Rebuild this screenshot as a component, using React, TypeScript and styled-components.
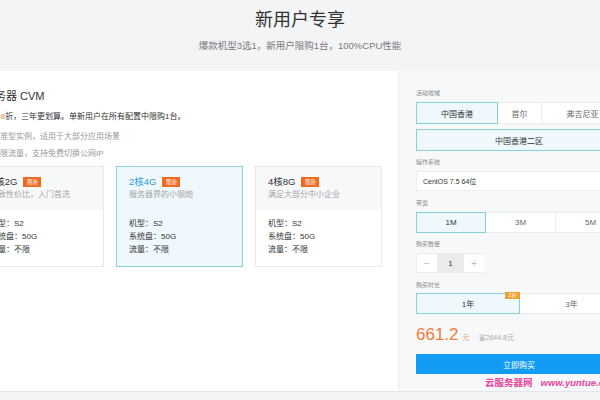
import React from 'react'
import styled, { createGlobalStyle } from 'styled-components'

const GlobalStyle = createGlobalStyle`
  html, body {
    margin: 0;
    padding: 0;
    background: #f3f4f6;
    overflow: hidden;
  }
  body {
    font-family: "Liberation Sans", "Noto Sans CJK SC", sans-serif;
    color: #333;
  }
`

const Page = styled.div`
  width: 600px;
  height: 400px;
  overflow: hidden;
  background: #f3f4f6;
`

const Header = styled.header`
  height: 71px;
  display: flex;
  flex-direction: column;
  align-items: center;
  padding-top: 9px;
  box-sizing: border-box;
`

const Title = styled.h1`
  margin: 0;
  font-size: 18px;
  line-height: 22px;
  font-weight: 400;
  color: #333;
`

const Subtitle = styled.p`
  margin: 9px 0 0;
  font-size: 9.5px;
  line-height: 12px;
  color: #7a7a7a;
`

const Main = styled.main`
  display: flex;
  gap: 2px;
  height: 320px;
  border-bottom: 1px solid #e3e5e9;
`

const LeftPanel = styled.section`
  flex: 0 0 398px;
  background: #fff;
  padding-top: 18px;
  box-sizing: border-box;
  overflow: hidden;
`

const LeftInner = styled.div`
  margin-left: -24px;
`

const ProductTitle = styled.h2`
  margin: 0 0 0 -3px;
  font-size: 11px;
  line-height: 14px;
  font-weight: 400;
  color: #333;
`

const Lead = styled.p`
  margin: 8px 0 0 2px;
  font-size: 8px;
  line-height: 12px;
  color: #333;
`

const Hl = styled.span`
  color: #f07c3a;
`

const Note = styled.p<{ $gap: number }>`
  margin: ${({ $gap }) => $gap}px 0 0;
  padding-left: 16px;
  font-size: 8px;
  line-height: 12px;
  color: #9a9a9a;
`

const Cards = styled.div`
  display: grid;
  grid-template-columns: repeat(3, 127px);
  gap: 12px;
  margin-top: 6px;
  margin-left: 1px;
`

const Card = styled.div<{ $active?: boolean }>`
  border: 1px solid ${({ $active }) => ($active ? '#8ad3dc' : '#e7e9ec')};
  background: ${({ $active }) => ($active ? '#eef8fd' : '#fff')};
  height: 101px;
  box-sizing: border-box;
`

const CardHead = styled.div<{ $active?: boolean }>`
  height: 43px;
  box-sizing: border-box;
  padding: 8px 12px 0;
  background: ${({ $active }) => ($active ? 'transparent' : '#f7f8fa')};
`

const CardTitle = styled.div<{ $active?: boolean }>`
  display: flex;
  align-items: center;
  gap: 6px;
  font-size: 9.5px;
  line-height: 14px;
  color: ${({ $active }) => ($active ? '#2a9ed8' : '#333')};
`

const NewTag = styled.span`
  display: inline-block;
  width: 18px;
  height: 10px;
  line-height: 10px;
  text-align: center;
  font-size: 5.5px;
  color: #fff;
  background: #f06a1d;
`

const CardDesc = styled.div`
  font-size: 8px;
  line-height: 12px;
  color: #a5a5a5;
`

const CardBody = styled.div`
  padding: 7px 12px 0;
`

const Spec = styled.div`
  font-size: 8px;
  line-height: 13px;
  color: #333;
`

const RightPanel = styled.aside`
  flex: 0 0 238px;
  background: #f7f8fa;
  padding: 17px 16px 0;
  box-sizing: border-box;
`

const Label = styled.div<{ $top: number; $bottom: number }>`
  font-size: 6px;
  line-height: 10px;
  color: #888;
  margin: ${({ $top, $bottom }) => `${$top}px 0 ${$bottom}px`};
`

const OptionRow = styled.div<{ $cols: string; $h: number; $top?: number }>`
  display: grid;
  grid-template-columns: ${({ $cols }) => $cols};
  height: ${({ $h }) => $h}px;
  margin-top: ${({ $top }) => $top || 0}px;
`

const Option = styled.div<{ $active?: boolean }>`
  position: relative;
  display: flex;
  align-items: center;
  justify-content: center;
  font-size: 8px;
  color: ${({ $active }) => ($active ? '#333' : '#666')};
  background: ${({ $active }) => ($active ? '#eef8fd' : '#fff')};
  border: 1px solid ${({ $active }) => ($active ? '#86d1d9' : '#ececec')};
  box-sizing: border-box;
  z-index: ${({ $active }) => ($active ? 1 : 0)};
  & + & {
    margin-left: -1px;
  }
`

const Discount = styled.span`
  position: absolute;
  top: -2px;
  right: -1px;
  width: 15px;
  height: 7px;
  line-height: 7px;
  text-align: center;
  font-size: 5px;
  color: #fff;
  background: #f0a030;
`

const Select = styled.div`
  height: 20px;
  display: flex;
  align-items: center;
  padding-left: 6px;
  font-size: 7px;
  color: #333;
  background: #fff;
  border: 1px solid #eceef1;
  box-sizing: border-box;
`

const Stepper = styled.div`
  display: grid;
  grid-template-columns: 20px 27px 20px;
  width: 67px;
  height: 20px;
  border: 1px solid #ececec;
  box-sizing: border-box;
  background: #fff;
`

const StepBtn = styled.div<{ $mid?: boolean }>`
  display: flex;
  align-items: center;
  justify-content: center;
  font-size: ${({ $mid }) => ($mid ? '8px' : '10px')};
  color: ${({ $mid }) => ($mid ? '#333' : '#bbb')};
  background: ${({ $mid }) => ($mid ? '#ebebeb' : '#fff')};
`

const PriceRow = styled.div`
  display: flex;
  align-items: baseline;
  margin-top: 10px;
  height: 22px;
`

const Price = styled.span`
  font-size: 17px;
  line-height: 22px;
  color: #f07c3a;
`

const Unit = styled.span`
  margin-left: 4px;
  font-size: 7px;
  color: #e9a073;
`

const Save = styled.span`
  margin-left: 9px;
  font-size: 7px;
  color: #aaa;
`

const BuyButton = styled.button`
  display: block;
  width: 206px;
  height: 20px;
  margin-top: 8px;
  border: 0;
  padding: 0;
  background: #129bf2;
  color: #fff;
  font-family: inherit;
  font-size: 8px;
`

const Watermark = styled.div`
  margin: 2px 0 0 69px;
  white-space: nowrap;
  font-size: 9.5px;
  line-height: 13px;
  font-weight: 700;
  color: #e8459b;
  em {
    margin-left: 8px;
    font-style: italic;
  }
`

const cards = [
  { title: '1核2G', desc: '极致性价比，入门首选' },
  { title: '2核4G', desc: '服务器界的小钢炮', active: true },
  { title: '4核8G', desc: '满足大部分中小企业' }
]

const App: React.FC = () => {
  return (
    <Page>
      <GlobalStyle />
      <Header>
        <Title>新用户专享</Title>
        <Subtitle>爆款机型3选1，新用户限购1台，100%CPU性能</Subtitle>
      </Header>
      <Main>
        <LeftPanel>
          <LeftInner>
            <ProductTitle>云服务器 CVM</ProductTitle>
            <Lead>
              低至<Hl>1.8</Hl>折，三年更划算。单新用户在所有配置中限购1台。
            </Lead>
            <Note $gap={8}>标准型实例，适用于大部分应用场景</Note>
            <Note $gap={5}>不限流量，支持免费切换公网IP</Note>
            <Cards>
              {cards.map((c) => (
                <Card key={c.title} $active={c.active}>
                  <CardHead $active={c.active}>
                    <CardTitle $active={c.active}>
                      {c.title}
                      <NewTag>限新</NewTag>
                    </CardTitle>
                    <CardDesc>{c.desc}</CardDesc>
                  </CardHead>
                  <CardBody>
                    <Spec>机型：S2</Spec>
                    <Spec>系统盘：50G</Spec>
                    <Spec>流量：不限</Spec>
                  </CardBody>
                </Card>
              ))}
            </Cards>
          </LeftInner>
        </LeftPanel>
        <RightPanel>
          <Label $top={0} $bottom={4}>活动地域</Label>
          <OptionRow $cols="82px 44px 82px" $h={22}>
            <Option $active>中国香港</Option>
            <Option>首尔</Option>
            <Option>弗吉尼亚</Option>
          </OptionRow>
          <OptionRow $cols="206px" $h={22} $top={5}>
            <Option $active>中国香港二区</Option>
          </OptionRow>
          <Label $top={6} $bottom={4}>操作系统</Label>
          <Select>CentOS 7.5 64位</Select>
          <Label $top={7} $bottom={4}>带宽</Label>
          <OptionRow $cols="70px 70px 70px" $h={21}>
            <Option $active>1M</Option>
            <Option>3M</Option>
            <Option>5M</Option>
          </OptionRow>
          <Label $top={6} $bottom={4}>购买数量</Label>
          <Stepper>
            <StepBtn>−</StepBtn>
            <StepBtn $mid>1</StepBtn>
            <StepBtn>+</StepBtn>
          </Stepper>
          <Label $top={7} $bottom={3}>购买时长</Label>
          <OptionRow $cols="104px 104px" $h={21}>
            <Option $active>
              1年
              <Discount>2折</Discount>
            </Option>
            <Option>3年</Option>
          </OptionRow>
          <PriceRow>
            <Price>661.2</Price>
            <Unit>元</Unit>
            <Save>省2644.8元</Save>
          </PriceRow>
          <BuyButton>立即购买</BuyButton>
          <Watermark>
            云服务器网<em>www.yuntue.com</em>
          </Watermark>
        </RightPanel>
      </Main>
    </Page>
  )
}

export default App
